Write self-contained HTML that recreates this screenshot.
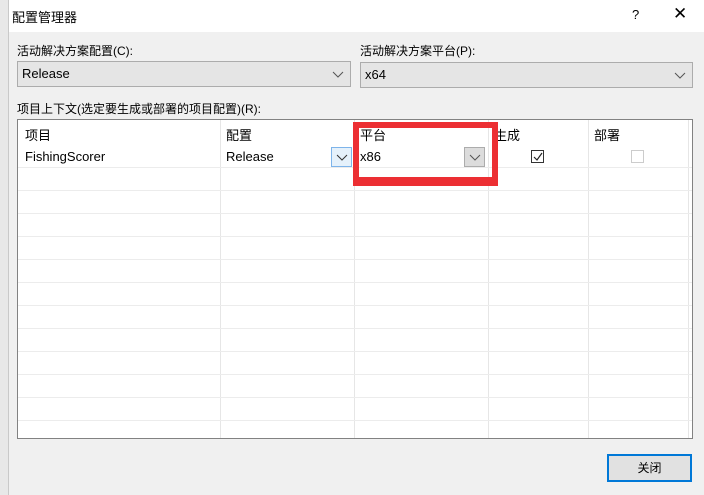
<!DOCTYPE html><html><head><meta charset="utf-8"><style>
*{margin:0;padding:0;box-sizing:border-box}
body{width:704px;height:495px;overflow:hidden;background:#f0f0f0;font-family:"Liberation Sans","Noto Sans CJK SC",sans-serif;font-size:12px;color:#000;position:relative}
.a{position:absolute}
.combo{position:absolute;background:#e5e5e5;border:1px solid #acacac;height:26px;line-height:24px;padding-left:4px;font-size:13px}
.chev{position:absolute;right:6px;top:9px;width:12px;height:7px}
.vl{position:absolute;top:0;bottom:0;width:1px;background:#e6e6e6}
.hl{position:absolute;left:0;right:0;height:1px;background:#ececec}
</style></head><body>
<div class="a" style="left:0;top:0;width:9px;height:495px;background:#e8e8e8;border-right:1px solid #c9c9c9"></div>
<div class="a" style="left:9px;top:0;width:695px;height:32px;background:#fff"></div>
<div class="a" style="left:12px;top:7px;font-size:13px">配置管理器</div>
<div class="a" style="left:632px;top:7px;font-size:13px">?</div>
<div class="a" style="left:673px;top:4px;font-size:17px">✕</div>
<div class="a" style="left:17px;top:42px;font-size:12px">活动解决方案配置(C):</div>
<div class="a" style="left:360px;top:42px;font-size:12px">活动解决方案平台(P):</div>
<div class="combo" style="left:17px;top:61px;width:334px">Release<svg class="chev" viewBox="0 0 12 7"><path d="M1 1l5 5 5-5" fill="none" stroke="#555" stroke-width="1"/></svg></div>
<div class="combo" style="left:360px;top:62px;width:333px">x64<svg class="chev" viewBox="0 0 12 7"><path d="M1 1l5 5 5-5" fill="none" stroke="#555" stroke-width="1"/></svg></div>
<div class="a" style="left:17px;top:100px">项目上下文(选定要生成或部署的项目配置)(R):</div>
<div class="a" style="left:17px;top:119px;width:676px;height:320px;background:#fff;border:1px solid #828282;overflow:hidden">
<div class="vl" style="left:202px"></div><div class="vl" style="left:336px"></div><div class="vl" style="left:470px"></div><div class="vl" style="left:570px"></div><div class="vl" style="left:670px"></div>
<div class="hl" style="top:47px"></div><div class="hl" style="top:70px"></div><div class="hl" style="top:93px"></div><div class="hl" style="top:116px"></div><div class="hl" style="top:139px"></div><div class="hl" style="top:162px"></div><div class="hl" style="top:185px"></div><div class="hl" style="top:208px"></div><div class="hl" style="top:231px"></div><div class="hl" style="top:254px"></div><div class="hl" style="top:277px"></div><div class="hl" style="top:300px"></div>
<div class="a" style="left:7px;top:5px;font-size:13px">项目</div>
<div class="a" style="left:208px;top:5px;font-size:13px">配置</div>
<div class="a" style="left:342px;top:5px;font-size:13px">平台</div>
<div class="a" style="left:476px;top:5px;font-size:13px">生成</div>
<div class="a" style="left:576px;top:5px;font-size:13px">部署</div>
<div class="a" style="left:7px;top:29px;font-size:13px">FishingScorer</div>
<div class="a" style="left:208px;top:29px;font-size:13px">Release</div>
<div class="a" style="left:313px;top:27px;width:21px;height:20px;border:1px solid #7eb4ea;background:#e5f1fb"><svg style="position:absolute;left:4px;top:6px" width="12" height="7" viewBox="0 0 12 7"><path d="M1 1l5 5 5-5" fill="none" stroke="#333"/></svg></div>
<div class="a" style="left:342px;top:29px;font-size:13px">x86</div>
<div class="a" style="left:446px;top:27px;width:21px;height:20px;border:1px solid #acacac;background:#dcdcdc"><svg style="position:absolute;left:4px;top:6px" width="12" height="7" viewBox="0 0 12 7"><path d="M1 1l5 5 5-5" fill="none" stroke="#555"/></svg></div>
<div class="a" style="left:513px;top:30px;width:13px;height:13px;border:1px solid #333;background:#fff"><svg style="position:absolute;left:1px;top:1px" width="10" height="10" viewBox="0 0 10 10"><path d="M1 5l3 3 5-7" fill="none" stroke="#222" stroke-width="1.2"/></svg></div>
<div class="a" style="left:613px;top:30px;width:13px;height:13px;border:1px solid #ccc;background:#fff"></div>
</div>
<div class="a" style="left:353px;top:122px;width:145px;height:64px;border:6px solid #ec2f33;border-bottom-width:9px"></div>
<div class="a" style="left:607px;top:454px;width:85px;height:28px;border:2px solid #0078d7;background:#e1e1e1;text-align:center;line-height:24px;font-size:12px">关闭</div>
</body></html>
